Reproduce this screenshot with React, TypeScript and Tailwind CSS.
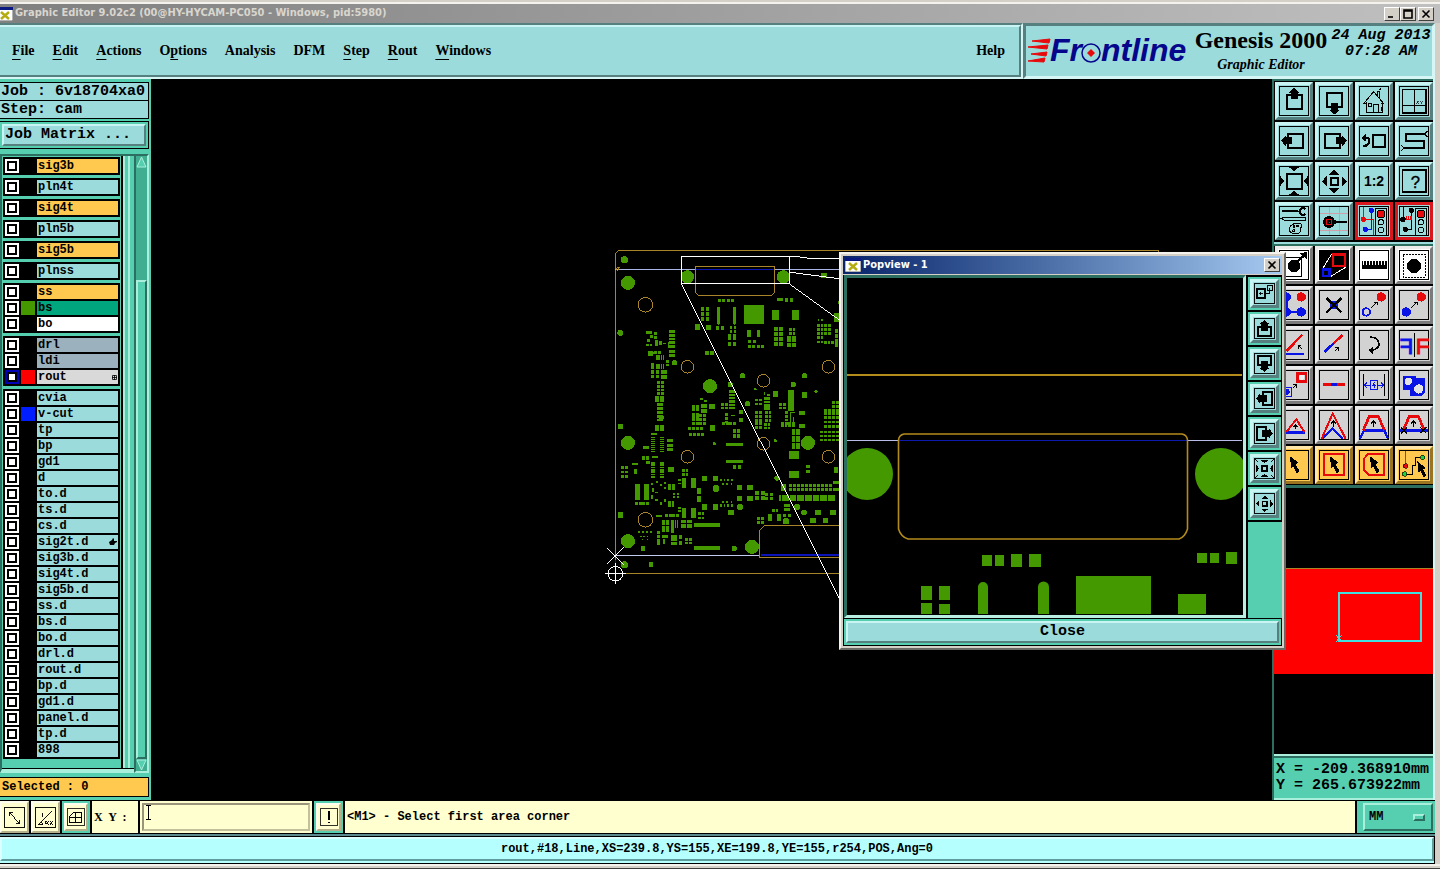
import type { ReactNode } from 'react'

type Layer = {
  name: string
  fill?: string
  swatch?: string
  active?: boolean
  mark?: 'grid' | 'hand'
}

const BEVEL_AQUA = 'border-t-[#c8f5f3] border-l-[#c8f5f3] border-b-[#55807f] border-r-[#55807f]'
const BEVEL_TEAL = 'border-t-[#a9efdc] border-l-[#a9efdc] border-b-[#2c6e5f] border-r-[#2c6e5f]'
const BEVEL_GRAY = 'border-t-[#ececec] border-l-[#ececec] border-b-[#7b7b7b] border-r-[#7b7b7b]'
const BEVEL_ORANGE = 'border-t-[#ffe6a8] border-l-[#ffe6a8] border-b-[#9a7420] border-r-[#9a7420]'
const BEVEL_CREAM = 'border-t-[#fffff0] border-l-[#fffff0] border-b-[#b5b08c] border-r-[#b5b08c]'

const MONO_SM = "font-['Liberation_Mono',monospace] text-[12px] font-bold leading-[14px]"
const MONO_LG = "font-['Liberation_Mono',monospace] text-[15px] font-bold leading-[16px]"

const ORANGE = 'bg-[#ffc84e]'
const SLATE = 'bg-[#9bb1bd]'

const layerGroups: Layer[][] = [
  [{ name: 'sig3b', fill: ORANGE }],
  [{ name: 'pln4t' }],
  [{ name: 'sig4t', fill: ORANGE }],
  [{ name: 'pln5b' }],
  [{ name: 'sig5b', fill: ORANGE }],
  [{ name: 'plnss' }],
  [
    { name: 'ss', fill: ORANGE },
    { name: 'bs', fill: 'bg-[#00a67e]', swatch: 'bg-[#449900]' },
    { name: 'bo', fill: 'bg-white' },
  ],
  [
    { name: 'drl', fill: SLATE },
    { name: 'ldi', fill: SLATE },
    { name: 'rout', fill: 'bg-[#d9d9d9]', swatch: 'bg-[#ff0000]', active: true, mark: 'grid' },
  ],
  [
    { name: 'cvia' },
    { name: 'v-cut', swatch: 'bg-[#001eff]' },
    { name: 'tp' },
    { name: 'bp' },
    { name: 'gd1' },
    { name: 'd' },
    { name: 'to.d' },
    { name: 'ts.d' },
    { name: 'cs.d' },
    { name: 'sig2t.d', mark: 'hand' },
    { name: 'sig3b.d' },
    { name: 'sig4t.d' },
    { name: 'sig5b.d' },
    { name: 'ss.d' },
    { name: 'bs.d' },
    { name: 'bo.d' },
    { name: 'drl.d' },
    { name: 'rout.d' },
    { name: 'bp.d' },
    { name: 'gd1.d' },
    { name: 'panel.d' },
    { name: 'tp.d' },
    { name: '898' },
  ],
]

// label, index of the underlined mnemonic (-1 for none)
const menus: [string, number][] = [
  ['File', 0],
  ['Edit', 0],
  ['Actions', 0],
  ['Options', 1],
  ['Analysis', -1],
  ['DFM', -1],
  ['Step', 0],
  ['Rout', 0],
  ['Windows', 0],
]

/* ---------- icons, all on a 90 x 90 grid ---------- */

const RED = '#e8090c'
const BLUE = '#0a14e6'

const cursor = <polygon points="32,18 58,38 50,43 62,64 53,70 42,48 37,56" fill="#000" />

const smallArrow = (
  <g stroke="#000" strokeWidth="3" fill="none">
    <path d="M36 54 L54 36 M44 36 H54 V46" />
  </g>
)

const trafficLight = (
  <g stroke="#000" strokeWidth="3">
    <rect x="49" y="7" width="34" height="80" fill="#9bdbdb" />
    <circle cx="66" cy="24" r="12" fill={RED} />
    <circle cx="66" cy="49" r="8" fill="none" />
    <circle cx="66" cy="72" r="8" fill="none" />
  </g>
)

// heavier pan arrow for the small popview buttons
const popArrow = (angle: number) => (
  <g transform={`rotate(${angle} 45 45)`}>
    <path d="M28 40 H17 V77 H73 V40 H62" fill="none" stroke="#000" strokeWidth="9" />
    <polygon points="45,7 66,27 60,27 60,57 30,57 30,27 24,27" fill="#000" />
  </g>
)

const icons: Record<string, ReactNode> = {
  panUp: (
    <>
      <rect x="24" y="27" width="44" height="42" fill="none" stroke="#000" strokeWidth="6" />
      <polygon points="46,5 62,20 56,20 56,39 36,39 36,20 30,20" fill="#000" />
    </>
  ),
  panDown: (
    <>
      <rect x="24" y="22" width="44" height="42" fill="none" stroke="#000" strokeWidth="6" />
      <polygon points="46,86 62,71 56,71 56,52 36,52 36,71 30,71" fill="#000" />
    </>
  ),
  panLeft: (
    <>
      <rect x="28" y="23" width="44" height="42" fill="none" stroke="#000" strokeWidth="6" />
      <polygon points="6,44 20,28 20,34 39,34 39,54 20,54 20,60" fill="#000" />
    </>
  ),
  panRight: (
    <>
      <rect x="18" y="23" width="44" height="42" fill="none" stroke="#000" strokeWidth="6" />
      <polygon points="84,44 70,28 70,34 51,34 51,54 70,54 70,60" fill="#000" />
    </>
  ),
  popUp: popArrow(0),
  popDown: popArrow(180),
  popLeft: popArrow(270),
  popRight: popArrow(90),
  home: (
    <g fill="none" stroke="#000" strokeWidth="3">
      <path d="M14 53 L44 17 L74 53 M21 48 V80 H69 V48 M43 80 V54 H57 V80 M27 52 H36 V60 H27 Z" />
      <path d="M54 26 V17 H61 V36 M60 12 L66 8 M14 53 H22 M66 53 H74 M66 62 V74" />
    </g>
  ),
  quadXY: (
    <g fill="none" stroke="#000" strokeWidth="3">
      <rect x="10" y="10" width="71" height="70" strokeWidth="5" />
      <path d="M45 10 V80 M10 57 H81" />
      <path d="M52 44 L60 53 M60 44 L52 53 M64 44 L68 49 L73 44 M68 49 V53" strokeWidth="2" />
    </g>
  ),
  undoView: (
    <>
      <rect x="43" y="28" width="36" height="36" fill="none" stroke="#000" strokeWidth="6" />
      <path d="M16 35 H24 Q31 36 30 48 Q29 60 12 60" fill="none" stroke="#000" strokeWidth="7" />
      <polygon points="7,36 22,23 22,48" fill="#000" />
    </>
  ),
  snake: (
    <g fill="none" stroke="#000">
      <path d="M76 24 H21 V44 H75 V66 H14" strokeWidth="6" />
      <path d="M76 24 L86 15 M76 24 L86 33 M14 66 L6 57 M14 66 L6 75" strokeWidth="3" />
    </g>
  ),
  zoomFit: (
    <>
      <rect x="24" y="24" width="44" height="44" fill="none" stroke="#000" strokeWidth="5" />
      <path d="M28 2 H62 L45 15 Z M28 88 H62 L45 75 Z M2 28 V62 L15 45 Z M88 28 V62 L75 45 Z" fill="#000" />
    </>
  ),
  zoomOut: (
    <>
      <rect x="36" y="36" width="20" height="20" fill="none" stroke="#000" strokeWidth="5" />
      <path d="M46 11 L62 26 H30 Z M46 82 L62 67 H30 Z M9 46 L23 30 V62 Z M83 46 L69 30 V62 Z" fill="#000" />
    </>
  ),
  zoomIn: (
    <>
      <rect x="34" y="34" width="22" height="22" fill="none" stroke="#000" strokeWidth="8" />
      <path d="M26 8 H64 L45 22 Z M26 82 H64 L45 68 Z M8 26 V64 L22 45 Z M82 26 V64 L68 45 Z" fill="#000" />
      <path d="M6 6 L16 16 M84 6 L74 16 M6 84 L16 74 M84 84 L74 74" stroke="#000" strokeWidth="4" />
    </>
  ),
  ratio: (
    <text x="45" y="60" textAnchor="middle" fontFamily="Liberation Sans, sans-serif" fontWeight="700" fontSize="42">
      1:2
    </text>
  ),
  help: (
    <>
      <rect x="10" y="11" width="71" height="68" fill="none" stroke="#000" strokeWidth="5" />
      <text x="49" y="65" textAnchor="middle" fontFamily="Liberation Sans, sans-serif" fontSize="50" stroke="#000">
        ?
      </text>
    </>
  ),
  tools: (
    <g fill="none" stroke="#000" strokeWidth="3">
      <path d="M9 16 H58" strokeWidth="6" />
      <path d="M80 9 A11 10 0 1 0 80 24" strokeWidth="7" />
      <path d="M6 38 L18 33 H78 V43 H18 Z" />
      <path d="M32 64 Q40 50 60 52 Q72 54 68 64 Q62 66 66 74 Q60 88 40 82 Q28 78 32 64 Z" />
      <circle cx="45" cy="62" r="3" />
      <circle cx="44" cy="74" r="3" />
      <circle cx="56" cy="60" r="3" />
    </g>
  ),
  probe: (
    <>
      <path d="M30 2 V88 M62 2 V88 M2 22 H88 M2 74 H88" stroke="#cf9fa8" strokeWidth="3" />
      <path d="M38 38 L52 44 V52 L38 58 Z" fill="#000" />
      <path d="M44 48 H84" stroke="#000" strokeWidth="8" />
      <circle cx="30" cy="48" r="18" fill="#000" />
      <rect x="22" y="40" width="16" height="16" fill="none" stroke={RED} strokeWidth="3" />
      <rect x="29" y="47" width="3" height="3" fill={RED} />
    </>
  ),
  netOn: (
    <>
      <path d="M13 3 V40 H44 V88" fill="none" stroke={RED} strokeWidth="3" />
      <path d="M37 13 V70 H20" fill="none" stroke={BLUE} strokeWidth="3" />
      <circle cx="13" cy="40" r="8" fill={RED} />
      <circle cx="37" cy="13" r="8" fill={BLUE} />
      <circle cx="19" cy="70" r="8" fill={BLUE} />
      {trafficLight}
    </>
  ),
  netOff: (
    <>
      <path d="M12 3 V40 H20 M37 13 V70 H20" fill="none" stroke="#000" strokeWidth="3" />
      <path d="M20 41 H38 M22 30 V41 M29 30 V41 M36 30 V41" stroke={RED} strokeWidth="4" />
      <circle cx="12" cy="40" r="8" />
      <circle cx="37" cy="13" r="8" />
      <circle cx="19" cy="70" r="8" />
      {trafficLight}
    </>
  ),
  movePad: (
    <>
      <rect x="8" y="22" width="60" height="58" fill="none" stroke="#000" strokeWidth="3" />
      <circle cx="45" cy="48" r="19" />
      <path d="M50 38 L76 16" stroke="#000" strokeWidth="7" />
      <polygon points="84,6 84,28 62,10" />
    </>
  ),
  stretch: (
    <>
      <rect x="3" y="3" width="84" height="84" fill="#000" />
      <path d="M38 12 L10 58 M80 52 L34 80" stroke="#fff" strokeWidth="3" />
      <rect x="42" y="13" width="35" height="35" fill="none" stroke={RED} strokeWidth="7" />
      <rect x="12" y="58" width="19" height="19" fill="none" stroke={BLUE} strokeWidth="7" />
    </>
  ),
  ruler: (
    <>
      <rect x="8" y="32" width="76" height="25" fill="#000" />
      <path
        d="M13 32 V44 M22 32 V44 M31 32 V44 M40 32 V44 M49 32 V44 M58 32 V44 M67 32 V44 M76 32 V44"
        stroke="#fff"
        strokeWidth="3"
      />
    </>
  ),
  selectPad: (
    <>
      <rect x="12" y="13" width="67" height="68" fill="none" stroke="#000" strokeWidth="3" strokeDasharray="6 3" />
      <circle cx="45" cy="48" r="21" />
    </>
  ),
  link: (
    <>
      <path d="M22 21 V66 H67" fill="none" stroke={BLUE} strokeWidth="7" />
      <circle cx="22" cy="66" r="14" fill={BLUE} />
      <circle cx="22" cy="21" r="14" fill={BLUE} />
      <circle cx="67" cy="66" r="14" fill={BLUE} />
      <circle cx="67" cy="21" r="14" fill={RED} />
    </>
  ),
  remove: (
    <>
      <circle cx="45" cy="45" r="13" fill={BLUE} />
      <path d="M22 24 L68 67 M68 24 L22 67" stroke="#000" strokeWidth="7" />
    </>
  ),
  copyPad: (
    <>
      <circle cx="22" cy="66" r="11" fill="none" stroke={BLUE} strokeWidth="6" />
      <circle cx="67" cy="21" r="14" fill={RED} />
      {smallArrow}
    </>
  ),
  movePadTo: (
    <>
      <circle cx="22" cy="66" r="14" fill={BLUE} />
      <circle cx="67" cy="21" r="14" fill={RED} />
      {smallArrow}
    </>
  ),
  angle: (
    <>
      <path d="M70 14 L22 64" stroke={RED} strokeWidth="7" />
      <path d="M10 72 H76" stroke={BLUE} strokeWidth="7" />
      <path d="M70 58 L58 47 M58 56 V47 H67" fill="none" stroke="#000" strokeWidth="3" />
    </>
  ),
  extend: (
    <>
      <path d="M17 66 L46 38" stroke={BLUE} strokeWidth="8" />
      <path d="M44 40 L71 14" stroke={RED} strokeWidth="8" />
      <path d="M48 64 L59 52 M49 52 H59 V62" fill="none" stroke="#000" strokeWidth="3" />
    </>
  ),
  rotate: (
    <>
      <path d="M32 22 Q52 20 58 34 Q64 50 50 57 Q44 60 36 60" fill="none" stroke="#000" strokeWidth="5" />
      <polygon points="28,61 42,50 42,72" />
    </>
  ),
  mirror: (
    <g fontFamily="Liberation Sans, sans-serif" fontSize="66" strokeWidth="3">
      <text x="50" y="71" fill={RED} stroke={RED}>
        F
      </text>
      <text x="-43" y="71" transform="scale(-1 1)" fill={BLUE} stroke={BLUE}>
        F
      </text>
      <path d="M47 9 V82" stroke="#000" />
    </g>
  ),
  resize: (
    <>
      <rect x="55" y="10" width="26" height="24" fill="none" stroke={RED} strokeWidth="8" />
      <circle cx="68" cy="22" r="8" fill="#eee" />
      <rect x="10" y="52" width="26" height="26" fill="none" stroke={BLUE} strokeWidth="3" />
      <circle cx="23" cy="65" r="9" fill={BLUE} />
      <path d="M42 54 L52 44 M43 44 H52 V53" fill="none" stroke="#000" strokeWidth="3" />
    </>
  ),
  split: (
    <>
      <path d="M12 43 H77" stroke={RED} strokeWidth="7" />
      <path d="M35 43 H55" stroke={BLUE} strokeWidth="9" />
    </>
  ),
  spacing: (
    <g fill="none" stroke={BLUE} strokeWidth="3">
      <path d="M13 12 V79 M77 12 V79" stroke="#000" />
      <path d="M16 46 H35 M55 46 H74 M24 38 L16 46 L24 54 M66 38 L74 46 L66 54" />
      <rect x="35" y="31" width="20" height="28" />
      <path d="M46 37 L41 47 H50 M47 41 V54" />
    </g>
  ),
  merge: (
    <>
      <path d="M12 17 H52 V25 H78 V66 L68 78 H34 V60 H12 Z" fill={BLUE} />
      <circle cx="28" cy="34" r="11" fill="#e4e4e4" />
      <circle cx="59" cy="57" r="14" fill="#e4e4e4" />
    </>
  ),
  peakFlat: (
    <>
      <path d="M8 67 H78" stroke={BLUE} strokeWidth="7" />
      <path d="M22 66 L52 28 L76 66" fill="none" stroke={RED} strokeWidth="6" />
      <path d="M50 58 V46 M44 51 L50 45 L56 51" fill="none" stroke="#000" strokeWidth="3" />
    </>
  ),
  peakSharp: (
    <>
      <path d="M10 86 L41 56 L72 86" fill="none" stroke={BLUE} strokeWidth="6" />
      <path d="M8 86 L41 11 L80 86" fill="none" stroke={RED} strokeWidth="6" />
      <path d="M43 52 V34 M36 41 L43 33 L50 41" fill="none" stroke="#000" strokeWidth="4" />
    </>
  ),
  trapezoid: (
    <>
      <path d="M3 86 L15 61 H76 L87 86" fill="none" stroke={BLUE} strokeWidth="7" />
      <path d="M13 60 L31 19 H57 L77 60" fill="none" stroke={RED} strokeWidth="8" />
      <path d="M43 52 V34 M36 41 L43 33 L50 41" fill="none" stroke="#000" strokeWidth="4" />
    </>
  ),
  trapezoidCut: (
    <>
      <path d="M2 61 H88" stroke={BLUE} strokeWidth="7" />
      <path d="M14 58 L31 19 H57 L76 58" fill="none" stroke={RED} strokeWidth="8" />
      <path d="M43 52 V34 M36 41 L43 33 L50 41" fill="none" stroke="#000" strokeWidth="4" />
      <path d="M6 52 L24 70 M24 52 L6 70 M64 52 L82 70 M82 52 L64 70" stroke="#000" strokeWidth="3" />
    </>
  ),
  pick: cursor,
  pickRect: (
    <>
      <rect x="15" y="11" width="61" height="63" fill="none" stroke={RED} strokeWidth="6" />
      {cursor}
    </>
  ),
  pickPoly: (
    <>
      <path d="M28 11 H76 V74 H28 L15 60 V26 Z" fill="none" stroke={RED} strokeWidth="6" />
      {cursor}
    </>
  ),
  pickNet: (
    <>
      <path d="M20 3 V48" stroke="#b33" strokeWidth="3" />
      <path d="M17 72 H40 V46 H48 V22 H71" fill="none" stroke="#000" strokeWidth="3" />
      <circle cx="20" cy="48" r="7" fill={RED} stroke="#000" strokeWidth="2" />
      <circle cx="17" cy="72" r="7" fill="#1fd13a" stroke="#000" strokeWidth="2" />
      <circle cx="71" cy="22" r="7" fill="#1fd13a" stroke="#000" strokeWidth="2" />
      <polygon points="55,34 80,54 72,58 82,76 74,82 65,64 59,70" />
    </>
  ),
  linkView: (
    <g fill="none" stroke="#000">
      <rect x="13" y="27" width="34" height="36" strokeWidth="8" />
      <path d="M22 45 H40 M30 37 L22 45 L30 53" strokeWidth="4" />
      <rect x="58" y="12" width="20" height="20" strokeWidth="5" />
      <path d="M68 22 V46 H50" strokeWidth="5" />
    </g>
  ),
  measureDiag: (
    <g fill="none" stroke="#000" strokeWidth="4">
      <path d="M22 22 L68 72 M22 38 V22 H38 M68 56 V72 H52" />
    </g>
  ),
  measureAngle: (
    <g fill="none" stroke="#000" strokeWidth="4">
      <path d="M14 76 L72 16 M14 76 H36 M24 64 Q34 66 34 76 M30 26 V40 H36" />
      <path d="M50 60 Q40 60 44 70 Q50 78 58 60 M50 64 L60 76 M64 60 L76 76 M76 60 L64 76" />
    </g>
  ),
  snapGrid: (
    <g fill="none" stroke="#000" strokeWidth="5">
      <path d="M34 20 H74 V74 H14 V40 Z M44 20 V74 M14 48 H74" />
    </g>
  ),
  alert: (
    <g fill="#000">
      <rect x="42" y="14" width="7" height="46" />
      <rect x="42" y="68" width="7" height="8" />
    </g>
  ),
}

const viewTools = [
  'panUp', 'panDown', 'home', 'quadXY',
  'panLeft', 'panRight', 'undoView', 'snake',
  'zoomFit', 'zoomOut', 'ratio', 'help',
  'tools', 'probe', 'netOn', 'netOff',
]

const editTools = [
  'movePad', 'stretch', 'ruler', 'selectPad',
  'link', 'remove', 'copyPad', 'movePadTo',
  'angle', 'extend', 'rotate', 'mirror',
  'resize', 'split', 'spacing', 'merge',
  'peakFlat', 'peakSharp', 'trapezoid', 'trapezoidCut',
  'pick', 'pickRect', 'pickPoly', 'pickNet',
]

const popTools = ['linkView', 'popUp', 'popDown', 'popLeft', 'popRight', 'zoomIn', 'zoomOut']

function Icon({ name, className }: { name: string; className: string }) {
  return (
    <svg viewBox="0 0 90 90" className={className} shapeRendering="crispEdges" aria-hidden="true">
      <rect x="2" y="2" width="86" height="86" fill="none" stroke="#000" strokeWidth="4" />
      {icons[name]}
    </svg>
  )
}

function ToolButton({ name, skin }: { name: string; skin: string }) {
  return (
    <button
      type="button"
      aria-label={name}
      className={`flex h-[38px] w-[38px] items-center justify-center border-3 ${skin}`}
    >
      <Icon name={name} className="h-[30px] w-[30px]" />
    </button>
  )
}

/* ---------- board artwork, drawn at three units per screen pixel ---------- */

// x, y, w, h, cols, rows, dx, dy
const padBlocks: number[][] = [
  [354, 177, 9, 9, 4, 1, 13, 0], [531, 174, 18, 9], [556, 174, 9, 12, 2, 1, 14, 0],
  [303, 201, 9, 11, 2, 3, 15, 15], [351, 201, 9, 50], [399, 201, 9, 50], [354, 206, 3, 48], [402, 206, 3, 48],
  [432, 195, 60, 57], [516, 210, 21, 30], [576, 210, 21, 30],
  [285, 252, 15, 18], [318, 255, 15, 15], [348, 258, 10, 12, 2, 1, 14, 0],
  [390, 258, 7, 8, 2, 2, 11, 11], [384, 282, 9, 18, 2, 1, 15, 0], [384, 306, 9, 12, 2, 1, 15, 0],
  [441, 270, 12, 21], [471, 270, 9, 21], [444, 300, 9, 9, 2, 1, 14, 0], [444, 315, 9, 9, 4, 1, 13, 0],
  [522, 261, 12, 12, 2, 4, 15, 15], [567, 264, 8, 8, 2, 2, 11, 11], [561, 288, 12, 18, 2, 1, 16, 0], [561, 308, 12, 12, 2, 1, 16, 0],
  [654, 237, 4, 5, 2, 1, 10, 0], [651, 252, 8, 8, 4, 3, 11, 12], [651, 288, 8, 8, 2, 2, 11, 13], [672, 303, 8, 8, 3, 1, 11, 0],
  [705, 267, 9, 12, 1, 4, 0, 14], [702, 217, 16, 28], [663, 99, 18, 14], [714, 183, 4, 8],
  [138, 273, 8, 8, 2, 1, 10, 0], [162, 276, 9, 9, 1, 2, 0, 12], [150, 283, 8, 9], [141, 296, 8, 9], [138, 310, 9, 8],
  [165, 300, 8, 18], [177, 303, 9, 12], [189, 307, 10, 5], [150, 310, 6, 8],
  [207, 270, 8, 8, 2, 5, 10, 11], [204, 306, 4, 16], [207, 330, 8, 9, 2, 2, 10, 11],
  [162, 333, 9, 9, 2, 1, 12, 0], [168, 345, 12, 15], [183, 345, 3, 15, 2, 1, 6, 0],
  [153, 369, 9, 18], [168, 372, 12, 15], [183, 372, 3, 15, 2, 1, 6, 0], [198, 360, 8, 8, 1, 2, 0, 10],
  [153, 390, 9, 10, 2, 2, 14, 13], [183, 390, 18, 12, 1, 2, 0, 15],
  [171, 423, 9, 8, 2, 4, 12, 11], [165, 468, 12, 18, 2, 1, 15, 0], [171, 489, 8, 9, 2, 3, 10, 11], [177, 528, 15, 9],
  [315, 333, 11, 12, 2, 1, 16, 0],
  [300, 472, 10, 6], [312, 478, 8, 8], [276, 495, 9, 18, 2, 2, 12, 24], [303, 490, 18, 12, 1, 2, 0, 17], [327, 492, 18, 15],
  [387, 450, 18, 7, 1, 6, 0, 10], [363, 489, 9, 7, 2, 2, 11, 10], [375, 519, 9, 8, 1, 3, 0, 11], [393, 524, 12, 3], [417, 510, 12, 12, 1, 2, 0, 24],
  [465, 477, 9, 6, 2, 2, 12, 10], [492, 455, 4, 8], [500, 462, 9, 6], [492, 471, 18, 8, 1, 4, 0, 10],
  [465, 513, 9, 9, 2, 5, 12, 11], [495, 513, 8, 8, 2, 3, 11, 12], [520, 453, 14, 18],
  [537, 489, 9, 7, 2, 2, 12, 10], [564, 450, 8, 7, 2, 7, 10, 9], [607, 456, 14, 17], [598, 511, 17, 13],
  [555, 513, 8, 8, 1, 4, 0, 11], [569, 516, 3, 30], [572, 516, 12, 3], [578, 530, 4, 20],
  [672, 507, 9, 18, 2, 1, 12, 0], [696, 483, 9, 9, 2, 5, 12, 11],
  [171, 513, 8, 8, 2, 3, 10, 11], [165, 555, 12, 18, 2, 1, 15, 0], [54, 550, 15, 17], [153, 577, 17, 8],
  [153, 590, 12, 4, 2, 8, 27, 6], [129, 618, 8, 8, 2, 1, 10, 0], [201, 597, 8, 9, 2, 3, 10, 13],
  [126, 648, 9, 10, 2, 1, 12, 0], [138, 663, 12, 9], [156, 648, 8, 6, 2, 1, 10, 0], [153, 665, 12, 5, 2, 7, 27, 7],
  [204, 681, 18, 15], [63, 678, 9, 8, 2, 3, 13, 13], [96, 669, 18, 6], [102, 687, 9, 15], [246, 687, 8, 8, 2, 2, 11, 11],
  [105, 732, 14, 4, 2, 8, 27, 6], [105, 786, 9, 8, 4, 1, 11, 0],
  [153, 729, 6, 6], [168, 723, 6, 5], [180, 732, 6, 6], [192, 726, 6, 6], [156, 744, 6, 12], [165, 755, 8, 4], [192, 739, 6, 8],
  [204, 732, 9, 7, 2, 2, 11, 9], [153, 765, 6, 10], [165, 776, 8, 6], [180, 785, 6, 10], [192, 775, 6, 10], [204, 783, 8, 7, 2, 2, 11, 9],
  [220, 757, 6, 6, 2, 2, 11, 10], [246, 714, 13, 4, 2, 5, 28, 6], [234, 717, 8, 5, 1, 2, 0, 10],
  [306, 708, 15, 15, 2, 1, 33, 0], [291, 744, 12, 18, 1, 2, 0, 24], [306, 792, 15, 17, 2, 1, 33, 0],
  [360, 715, 5, 8, 4, 1, 11, 0], [366, 728, 5, 6, 3, 1, 13, 0], [360, 792, 5, 8, 4, 1, 11, 0], [366, 781, 5, 6, 3, 1, 13, 0],
  [384, 810, 18, 14], [411, 735, 15, 15, 1, 2, 0, 33], [441, 735, 18, 15, 1, 2, 0, 33],
  [465, 753, 12, 12, 2, 2, 18, 14], [495, 758, 9, 9, 2, 2, 14, 12],
  [246, 804, 13, 4, 2, 5, 28, 6], [234, 800, 8, 5, 1, 2, 0, 10], [294, 816, 8, 8, 2, 2, 11, 13], [54, 815, 15, 18],
  [168, 823, 8, 7, 2, 1, 10, 0], [195, 822, 9, 8, 4, 1, 11, 0], [186, 838, 10, 16, 2, 2, 12, 20], [213, 838, 10, 40], [225, 838, 4, 24, 2, 1, 6, 0],
  [243, 838, 15, 10, 2, 2, 18, 14], [282, 849, 78, 12], [282, 918, 78, 12],
  [114, 873, 5, 5, 4, 1, 12, 0], [120, 886, 5, 5, 3, 1, 10, 0], [126, 895, 4, 4, 2, 1, 14, 0], [123, 917, 12, 15],
  [171, 873, 8, 9, 1, 4, 0, 11], [186, 883, 18, 9], [189, 897, 6, 14], [213, 883, 18, 9, 1, 3, 0, 11], [237, 885, 9, 12, 1, 2, 0, 18], [255, 894, 8, 8, 2, 2, 12, 10],
  [378, 609, 51, 9], [378, 660, 51, 9], [399, 675, 9, 12, 2, 1, 14, 0],
  [264, 560, 8, 8, 4, 1, 12, 0], [267, 578, 8, 8, 4, 1, 12, 0], [276, 520, 9, 9, 4, 3, 11, 12], [330, 553, 15, 19],
  [366, 545, 9, 8, 4, 1, 11, 0], [399, 567, 9, 12, 2, 2, 12, 15], [492, 548, 8, 8, 2, 2, 11, 11],
  [543, 545, 8, 8, 4, 2, 11, 8], [576, 567, 10, 18, 2, 3, 13, 21], [598, 550, 16, 12],
  [567, 633, 30, 24], [567, 693, 30, 21], [618, 675, 12, 9, 1, 2, 0, 14], [702, 681, 12, 18], [699, 723, 18, 9], [699, 744, 18, 9],
  [660, 571, 9, 8, 5, 3, 12, 12], [672, 528, 8, 8, 4, 3, 12, 13],
  [543, 732, 14, 20], [567, 732, 10, 9, 11, 2, 12, 12], [537, 765, 6, 18], [546, 765, 20, 18, 7, 1, 23, 0],
  [471, 830, 9, 8, 2, 2, 13, 12], [504, 822, 12, 20], [516, 807, 8, 8, 2, 1, 11, 0], [531, 822, 12, 20], [552, 792, 8, 9, 2, 2, 10, 12], [550, 820, 9, 10, 2, 1, 15, 0],
  [645, 810, 18, 14], [690, 810, 18, 14], [630, 834, 18, 14], [669, 834, 15, 14], [146, 966, 12, 14],
]

const padCircles = [
  [73, 58, 11], [84, 127, 21], [262, 109, 20], [550, 109, 20], [61, 277, 9], [152, 339, 9], [223, 367, 8],
  [330, 437, 21], [391, 432, 8], [427, 406, 8], [442, 490, 8], [580, 432, 8], [613, 406, 8], [466, 446, 4], [648, 454, 5],
  [343, 610, 5], [526, 601, 5], [84, 607, 21], [624, 607, 21], [84, 902, 21], [456, 919, 21], [73, 973, 11],
  [348, 744, 10], [420, 800, 10], [591, 800, 10], [612, 816, 9], [558, 842, 10], [531, 713, 8], [403, 924, 8],
]

const holes = [
  [136, 193, 22], [262, 379, 19], [490, 421, 19], [685, 379, 19],
  [262, 649, 19], [490, 610, 19], [685, 649, 19], [136, 838, 22],
]

const padPath = padBlocks
  .map(([x, y, w, h, cols = 1, rows = 1, dx = 0, dy = 0]) => {
    let d = ''
    for (let r = 0; r < rows; r++) {
      for (let c = 0; c < cols; c++) d += `M${x + c * dx} ${y + r * dy}h${w}v${h}h${-w}z`
    }
    return d
  })
  .join('')

function Board() {
  return (
    <svg viewBox="151 79 1121 720" className="block min-w-0 flex-1" shapeRendering="crispEdges" aria-label="Board">
      <g transform="translate(600 240) scale(0.33333)" fill="none" strokeWidth="3">
        <path d="M1677 31 H54 L46 39 V1000 H1677 V31" stroke="#a88528" />
        <path d="M46 86 H718" stroke="#a9b4e6" />
        <path d={padPath} fill="#449900" />
        <g fill="#449900">
          {padCircles.map(([cx, cy, r]) => (
            <circle key={`${cx}-${cy}`} cx={cx} cy={cy} r={r} />
          ))}
        </g>
        <g stroke="#a88528">
          {holes.map(([cx, cy, r]) => (
            <circle key={`${cx}-${cy}`} cx={cx} cy={cy} r={r} />
          ))}
          <path d="M286 79 H524 V156 L514 166 H298 L286 155 Z" />
          <path d="M720 856 H492 L479 868 V952 H720" />
          <path d="M46 90 L54 80 H60 L50 92" />
        </g>
        <path d="M288 87 H522 M482 944 H720" stroke="#0c14b8" strokeWidth="5" />
        <path d="M46 946 H478" stroke="#c5cbee" />
        <path d="M46 960 V1000 H78" stroke="#0c14b8" />
        <path d="M244 130 V49 H568 V130 Z M568 49 H596 L640 55 H720 M568 95 L720 115 M568 130 L720 240 M244 130 L720 1078" stroke="#fff" />
        <g stroke="#fff">
          <path d="M20 921 L71 971 M71 921 L20 971 M46 968 V1032 M15 1000 H77" />
          <circle cx="46" cy="1000" r="22" />
        </g>
      </g>
    </svg>
  )
}

function PopBoard() {
  return (
    <svg viewBox="847 278 396 337" className="block w-full" aria-label="Zoomed board">
      <g fill="#449900">
        <circle cx="867" cy="474" r="26" />
        <circle cx="1221" cy="474" r="26" />
        <path d="M982 555h10v11h-10z M995 555h9v11h-9z M1011 554h11v13h-11z M1029 554h12v13h-12z" />
        <path d="M1197 553h10v10h-10z M1210 553h9v10h-9z M1226 552h11v12h-11z" />
        <path d="M921 586h11v14h-11z M939 586h11v14h-11z M921 603h11v11h-11z M939 604h11v10h-11z" />
        <path d="M978 614v-27a5 5 0 0 1 10 0v27z M1038 614v-27a5 5 0 0 1 11 0v27z" />
        <path d="M1076 576h75v38h-75z M1178 594h28v20h-28z" />
      </g>
      <g fill="none">
        <path d="M847 375 H1242" stroke="#b48c1c" strokeWidth="2" />
        <path d="M847 440.5 H1242" stroke="#b9bce8" />
        <path d="M899 440.5 H1188" stroke="#0c1ab0" />
        <path d="M904 434 H1182 Q1187 435 1187.5 440 V529 Q1185 537 1179 539 H908 Q901 537 898.5 529 V440 Q899 435 904 434 Z" stroke="#b48c1c" strokeWidth="1.6" />
      </g>
    </svg>
  )
}

function AppIcon({ className }: { className: string }) {
  return (
    <svg viewBox="0 0 16 14" preserveAspectRatio="xMaxYMid slice" className={className} aria-hidden="true">
      <rect width="16" height="14" fill="#fff" stroke="#666" />
      <rect width="16" height="3" fill="#0a1a80" />
      <path d="M4 5 L12 12 M12 5 L4 12" stroke="#b3ad12" strokeWidth="2.5" />
    </svg>
  )
}

function WinButton({ label, d }: { label: string; d: string }) {
  return (
    <button
      type="button"
      aria-label={label}
      className="flex h-[14px] w-4 items-center justify-center border border-t-white border-r-[#404040] border-b-[#404040] border-l-white bg-[#d4d0c8]"
    >
      <svg viewBox="0 0 10 10" className="h-[10px] w-[10px]" fill="none" stroke="#000" strokeWidth="1.6">
        <path d={d} />
      </svg>
    </button>
  )
}

const CLOSE = 'M1.5 1.5 L8.5 8.5 M8.5 1.5 L1.5 8.5'

function Logo() {
  return (
    <svg viewBox="0 -8 164 48" className="h-12 w-[164px] shrink-0" role="img" aria-label="Frontline">
      <path d="M4 6 L22 4 L21 8 Z M0 12 L20 10 L19 14 Z M3 19 L19 17 L18 21 Z M0 26 L17 23 L16 27 Z" fill={RED} stroke={RED} />
      <g fill="#06068c" fontFamily="Liberation Sans, sans-serif" fontWeight="700" fontStyle="italic" fontSize="32">
        <text x="22" y="26">
          Fr
        </text>
        <text x="73" y="26">
          ntline
        </text>
      </g>
      <circle cx="63" cy="18" r="9" fill="#9bdbdb" stroke="#06068c" strokeWidth="1.5" />
      <path d="M63 14 L67 18 L63 22 L59 18 Z" fill={RED} />
    </svg>
  )
}

function Header() {
  return (
    <header className="flex h-14 shrink-0 font-['Liberation_Serif',serif]">
      <div className="flex-1 border-t-2 border-r-2 border-b-2 border-t-[#55807f] border-r-[#d5f6f4] border-b-[#d5f6f4]">
        <nav className={`flex h-full items-center gap-[18px] border-y-2 border-r-2 bg-[#9bdbdb] pr-[14px] pl-3 text-[14px] leading-4 font-bold ${BEVEL_AQUA}`}>
          {menus.map(([label, key]) => (
            <button type="button" key={label}>
              {key < 0 ? (
                label
              ) : (
                <>
                  {label.slice(0, key)}
                  <span className="underline underline-offset-4">{label[key]}</span>
                  {label.slice(key + 1)}
                </>
              )}
            </button>
          ))}
          <button type="button" className="ml-auto">
            Help
          </button>
        </nav>
      </div>
      <div className="flex w-[412px] border-3 border-t-[#55807f] border-r-[#d5f6f4] border-b-[#d5f6f4] border-l-[#55807f] bg-[#9bdbdb] pl-[2px]">
        <div className="flex items-center">
          <Logo />
        </div>
        <div className="flex flex-1 flex-col items-center">
          <h1 className="text-[24px] leading-[28px] font-bold whitespace-nowrap">Genesis 2000</h1>
          <p className="pt-[2px] text-[14px] leading-[18px] font-bold italic">Graphic Editor</p>
        </div>
        <div className={`w-[102px] pt-[2px] text-center italic ${MONO_LG}`}>
          <p className="whitespace-nowrap">24 Aug 2013</p>
          <p>07:28 AM</p>
        </div>
      </div>
    </header>
  )
}

function LayerRow({ layer }: { layer: Layer }) {
  const id = `layer-${layer.name}`
  return (
    <li className="flex h-[14px] gap-[2px]">
      <input
        id={id}
        type="checkbox"
        className={`h-[14px] w-[14px] appearance-none border-2 bg-white shadow-[inset_0_0_0_2px_#000] ${layer.active ? 'border-[#0000b4]' : 'border-white'}`}
      />
      <span className={`w-[14px] ${layer.swatch ?? 'bg-black'}`} />
      <label htmlFor={id} className={`flex w-[81px] items-center justify-between px-px ${MONO_SM} ${layer.fill ?? 'bg-[#9bdbdb]'}`}>
        {layer.name}
        {layer.mark === 'grid' && (
          <svg viewBox="0 0 5 5" className="h-[5px] w-[5px]" fill="none" stroke="#000">
            <path d="M.5 .5 h4 v4 h-4 z M2.5 0 v5 M0 2.5 h5" strokeWidth=".8" />
          </svg>
        )}
        {layer.mark === 'hand' && (
          <svg viewBox="0 0 8 8" className="h-2 w-2">
            <path d="M0 4 L3 2 L4 0 L5 1 V3 H8 V4 L6 5 L5 7 H1 Z" />
          </svg>
        )}
      </label>
    </li>
  )
}

function LayerPanel() {
  return (
    <aside className="flex w-[151px] shrink-0 flex-col bg-[#56cfb0] pt-[3px] pr-[2px]">
      <div className={`border border-l-0 border-black bg-[#9bdbdb] pt-px pl-px whitespace-nowrap ${MONO_LG}`}>Job : 6v18704xa0</div>
      <div className={`border border-t-0 border-l-0 border-black bg-[#9bdbdb] pt-px pl-px whitespace-nowrap ${MONO_LG}`}>Step: cam</div>
      <div className="mt-[2px] border border-l-0 border-black p-[2px]">
        <button type="button" className={`block w-full border-2 bg-[#9bdbdb] py-px pl-px text-left ${MONO_LG} ${BEVEL_AQUA}`}>
          Job Matrix ...
        </button>
      </div>

      <div className="mt-[5px] flex flex-1">
        <div className="flex flex-1 flex-col border-t-2 border-b-4 border-l-2 border-t-[#2c6e5f] border-b-[#a9efdc] border-l-[#2c6e5f]">
          <div className="flex flex-1 border-b border-black">
            <div className="flex w-[121px] flex-col gap-[3px] border-r-2 border-black pt-px pl-px">
              {layerGroups.map((group) => (
                <ul key={group[0].name} className="flex w-[117px] flex-col gap-[2px] bg-black p-[2px]">
                  {group.map((layer) => (
                    <LayerRow key={layer.name} layer={layer} />
                  ))}
                </ul>
              ))}
            </div>
            <div className="w-[7px] border-x-2 border-[#a9efdc]" />
          </div>
        </div>
        <div className="flex w-[15px] flex-col border-2 border-t-[#2c6e5f] border-r-[#a9efdc] border-b-[#a9efdc] border-l-[#2c6e5f] bg-[#41ae92]">
          <svg viewBox="0 0 11 12" className="w-[11px]">
            <path d="M5.5 1 L1 11 H10 Z" fill="#56cfb0" stroke="#a9efdc" />
          </svg>
          <div className="h-28" />
          <div className={`flex-1 border-2 bg-[#56cfb0] ${BEVEL_TEAL}`} />
          <svg viewBox="0 0 11 12" className="w-[11px]">
            <path d="M5.5 11 L1 1 H10 Z" fill="#56cfb0" stroke="#a9efdc" />
          </svg>
        </div>
      </div>

      <div className={`mt-1 mb-[3px] border border-l-0 border-black bg-[#ffc84e] px-[2px] py-[2px] ${MONO_SM}`}>Selected : 0</div>
    </aside>
  )
}

function ToolPanel() {
  return (
    <aside className="flex w-[163px] shrink-0 flex-col border-r-2 border-l-2 border-r-[#d5f6f4] border-l-[#2c6e5f] bg-black">
      <div className="border-t-2 border-[#2c6e5f]" />
      <div className="grid grid-cols-[repeat(4,38px)] gap-[2px] pt-px pb-[2px] pl-px">
        {viewTools.map((name) => (
          <ToolButton
            key={name}
            name={name}
            skin={name.startsWith('net') ? 'border-[#d8181c] bg-[#9bdbdb]' : `bg-[#9bdbdb] ${BEVEL_AQUA}`}
          />
        ))}
      </div>
      <div className="h-1 border-b-2 border-[#2c6e5f] bg-[#9bdbdb]" />
      <div className="grid grid-cols-[repeat(4,38px)] gap-[2px] pb-px pl-px">
        {editTools.map((name, i) => (
          <ToolButton
            key={name}
            name={name}
            skin={i < 4 ? `bg-white ${BEVEL_GRAY}` : i < 20 ? `bg-[#d2d2d2] ${BEVEL_GRAY}` : `bg-[#ffc84e] ${BEVEL_ORANGE}`}
          />
        ))}
      </div>
      <div className="h-[3px] bg-[#2c6e5f]" />
      <div className="flex flex-1 flex-col justify-center border-b-2 border-[#a9efdc]">
        <svg viewBox="1274 568 159 106" className="block w-full" shapeRendering="crispEdges" aria-label="Panel overview">
          <rect x="1274" y="568" width="160" height="106" fill="#f00" />
          <path d="M1274 568 H1434 M1274 674 H1434" stroke="#a88528" />
          <rect x="1339" y="593" width="82" height="48" fill="none" stroke="#40e0e0" strokeWidth="2" />
          <path d="M1336 635 L1342 642 M1342 635 L1336 642" stroke="#40e0e0" />
        </svg>
      </div>
      <div className={`border-y-2 border-t-[#2c6e5f] border-b-[#a9efdc] bg-[#56cfb0] pt-1 pb-1 pl-[2px] whitespace-nowrap ${MONO_LG}`}>
        <p>X = -209.368910mm</p>
        <p>Y = 265.673922mm</p>
      </div>
    </aside>
  )
}

function Popview() {
  return (
    <section
      role="dialog"
      aria-label="Popview - 1"
      className="absolute top-[173px] right-[149px] w-[447px] border-2 border-t-[#f4f2ec] border-r-[#6a6862] border-b-[#6a6862] border-l-[#f4f2ec] bg-[#d4d0c8] p-[2px]"
    >
      <div className="flex h-[18px] items-center gap-[2px] bg-linear-to-r from-[#0a246a] to-[#a6caf0] px-[2px] font-['DejaVu_Sans_Condensed','DejaVu_Sans',sans-serif] text-[11px] font-bold text-white">
        <AppIcon className="h-[14px] w-4" />
        <h2 className="flex-1">Popview - 1</h2>
        <WinButton label="Close window" d={CLOSE} />
      </div>
      <div className="mt-px flex gap-px bg-black pl-px">
        <div className="flex-1 border-3 border-t-[#2c6e5f] border-r-[#b9efe2] border-b-[#b9efe2] border-l-[#2c6e5f]">
          <PopBoard />
        </div>
        <div className="flex w-[35px] flex-col gap-[2px] pt-[2px] pl-px">
          {popTools.map((name) => (
            <button type="button" key={name} aria-label={name} className="h-[33px] w-[33px] bg-[#56cfb0] p-[2px]">
              <span className={`flex h-[29px] items-center justify-center border-3 bg-[#9bdbdb] ${BEVEL_AQUA}`}>
                <Icon name={name} className="h-[21px] w-[21px]" />
              </span>
            </button>
          ))}
          <div className="flex-1 bg-[#56cfb0]" />
        </div>
      </div>
      <div className="border border-black bg-[#56cfb0] p-[2px]">
        <button type="button" className={`block w-full border-2 bg-[#9bdbdb] py-px ${MONO_LG} ${BEVEL_AQUA}`}>
          Close
        </button>
      </div>
    </section>
  )
}

function CommandBar() {
  const small = `flex h-full w-[29px] items-center justify-center border-2 bg-[#ffffcf] ${BEVEL_CREAM}`
  return (
    <div className={`flex h-[34px] shrink-0 gap-[2px] border-y border-black bg-black ${MONO_SM}`}>
      <button type="button" aria-label="Measure distance" className={small}>
        <Icon name="measureDiag" className="h-[21px] w-[21px]" />
      </button>
      <button type="button" aria-label="Measure angle" className={small}>
        <Icon name="measureAngle" className="h-[21px] w-[21px]" />
      </button>
      <div className="w-[28px] bg-[#56cfb0] p-[2px]">
        <button type="button" aria-label="Snap" className={`flex h-full w-full items-center justify-center border-2 bg-[#ffffcf] ${BEVEL_CREAM}`}>
          <Icon name="snapGrid" className="h-[18px] w-[18px]" />
        </button>
      </div>
      <label htmlFor="xy" className="flex w-[46px] items-center bg-[#ffffcf] pl-[2px] font-['Liberation_Serif',serif] whitespace-pre">
        X  Y  :
      </label>
      <div className="flex w-[172px] bg-[#ffffcf] p-[2px]">
        <input
          id="xy"
          type="text"
          className="min-w-0 flex-1 border-2 border-t-[#99957a] border-r-[#c4c09c] border-b-[#c4c09c] border-l-[#99957a] px-1"
        />
        <svg viewBox="0 0 7 15" className="absolute mt-[2px] ml-[3px] h-[15px] w-[7px]" fill="none" stroke="#000">
          <path d="M1 .5 H6 M3.5 .5 V14.5 M1 14.5 H6" />
        </svg>
      </div>
      <div className="w-[29px] bg-[#56cfb0] p-[2px]">
        <button type="button" aria-label="Message" className={`flex h-full w-full items-center justify-center border-2 bg-[#ffffcf] ${BEVEL_CREAM}`}>
          <Icon name="alert" className="h-[18px] w-[18px]" />
        </button>
      </div>
      <p className="flex flex-1 items-center bg-[#ffffcf] pl-[2px]">&lt;M1&gt; - Select first area corner</p>
      <div className="relative w-[78px] bg-[#56cfb0] py-[2px] pr-[2px] pl-[6px]">
        <select aria-label="Units" defaultValue="MM" className={`h-full w-full appearance-none border-2 bg-[#56cfb0] pl-1 font-bold ${BEVEL_TEAL}`}>
          <option>MM</option>
          <option>INCH</option>
        </select>
        <span className={`pointer-events-none absolute top-[13px] right-[10px] h-[7px] w-3 border-2 bg-[#56cfb0] ${BEVEL_TEAL}`} />
      </div>
    </div>
  )
}

export default function App() {
  return (
    <div className="flex min-h-screen flex-col bg-[#d4d0c8] text-black">
      <div className="h-1 border-b-2 border-[#f4f2ec]" />
      <div className="flex h-[19px] shrink-0 items-center bg-linear-to-r from-[#808080] to-[#c0c0c0] pr-[6px] font-['DejaVu_Sans_Condensed','DejaVu_Sans',sans-serif] text-[11px] font-bold text-[#d9d6ce]">
        <AppIcon className="mr-[2px] h-[14px] w-[13px]" />
        <span className="flex-1">Graphic Editor 9.02c2 (00@HY-HYCAM-PC050 - Windows, pid:5980)</span>
        <WinButton label="Minimize" d="M1 8 H6" />
        <WinButton label="Maximize" d="M1 1 H9 V9 H1 Z M1 2 H9" />
        <span className="w-[2px]" />
        <WinButton label="Close" d={CLOSE} />
      </div>

      <div className="flex flex-1 flex-col pr-[5px]">
        <Header />
        <main className="relative flex flex-1 bg-black">
          <LayerPanel />
          <Board />
          <ToolPanel />
          <Popview />
        </main>
        <CommandBar />
        <footer className="shrink-0 border-t-2 border-t-[#5c8a8e]">
          <div className="border-y border-r border-black">
            <p className={`border-2 bg-[#b5ffff] py-[3px] text-center ${MONO_SM} border-t-[#dcffff] border-l-[#dcffff] border-b-[#5f9c9c] border-r-[#5f9c9c]`}>
              rout,#18,Line,XS=239.8,YS=155,XE=199.8,YE=155,r254,POS,Ang=0
            </p>
            <div className="h-[2px] bg-[#b5ffff]" />
          </div>
        </footer>
      </div>
      <div className="h-[5px] border-t-2 border-b border-t-[#f4f2ec] border-b-[#404040]" />
    </div>
  )
}
